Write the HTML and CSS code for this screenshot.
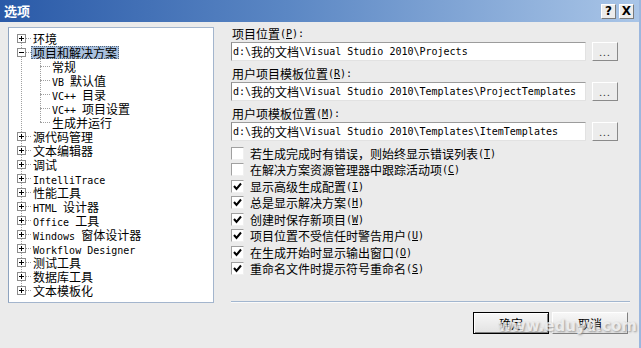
FILE: index.html
```html
<!DOCTYPE html>
<html lang="zh-CN">
<head>
    <meta charset="UTF-8">
    <title>选项</title>
    <link rel="stylesheet" href="styles.css">
</head>
<body>
    <div class="dialog">
        <div class="titlebar">
            <span class="title">选项</span>
            <div class="title-buttons">
                <span class="tbtn">?</span>
                <span class="tbtn">X</span>
            </div>
        </div>

        <div class="content">
            <div class="tree">
                <div class="tree-list">
                    <div class="node"><span class="toggle"></span><span class="hline"></span><span class="label">环境</span></div>
                    <div class="node"><span class="toggle open"></span><span class="hline"></span><span class="label selected">项目和解决方案</span></div>
                    <div class="children">
                        <div class="leaf"><span class="hline"></span><span class="label">常规</span></div>
                        <div class="leaf"><span class="hline"></span><span class="label"><span class="en">VB </span>默认值</span></div>
                        <div class="leaf"><span class="hline"></span><span class="label"><span class="en">VC++ </span>目录</span></div>
                        <div class="leaf"><span class="hline"></span><span class="label"><span class="en">VC++ </span>项目设置</span></div>
                        <div class="leaf"><span class="hline"></span><span class="label">生成并运行</span></div>
                    </div>
                    <div class="node"><span class="toggle"></span><span class="hline"></span><span class="label">源代码管理</span></div>
                    <div class="node"><span class="toggle"></span><span class="hline"></span><span class="label">文本编辑器</span></div>
                    <div class="node"><span class="toggle"></span><span class="hline"></span><span class="label">调试</span></div>
                    <div class="node"><span class="toggle"></span><span class="hline"></span><span class="label"><span class="en">IntelliTrace</span></span></div>
                    <div class="node"><span class="toggle"></span><span class="hline"></span><span class="label">性能工具</span></div>
                    <div class="node"><span class="toggle"></span><span class="hline"></span><span class="label"><span class="en">HTML </span>设计器</span></div>
                    <div class="node"><span class="toggle"></span><span class="hline"></span><span class="label"><span class="en">Office </span>工具</span></div>
                    <div class="node"><span class="toggle"></span><span class="hline"></span><span class="label"><span class="en">Windows </span>窗体设计器</span></div>
                    <div class="node"><span class="toggle"></span><span class="hline"></span><span class="label"><span class="en">Workflow Designer</span></span></div>
                    <div class="node"><span class="toggle"></span><span class="hline"></span><span class="label">测试工具</span></div>
                    <div class="node"><span class="toggle"></span><span class="hline"></span><span class="label">数据库工具</span></div>
                    <div class="node"><span class="toggle"></span><span class="hline"></span><span class="label">文本模板化</span></div>
                </div>
            </div>

            <div class="panel">
                <div class="field-label">项目位置<span class="en">(<u>P</u>):</span></div>
                <div class="field">
                    <div class="textbox"><span class="en">d:\</span>我的文档<span class="en">\Visual Studio 2010\Projects</span></div>
                    <span class="browse">...</span>
                </div>

                <div class="field-label">用户项目模板位置<span class="en">(<u>R</u>):</span></div>
                <div class="field">
                    <div class="textbox"><span class="en">d:\</span>我的文档<span class="en">\Visual Studio 2010\Templates\ProjectTemplates</span></div>
                    <span class="browse">...</span>
                </div>

                <div class="field-label">用户项模板位置<span class="en">(<u>M</u>):</span></div>
                <div class="field">
                    <div class="textbox"><span class="en">d:\</span>我的文档<span class="en">\Visual Studio 2010\Templates\ItemTemplates</span></div>
                    <span class="browse">...</span>
                </div>

                <div class="checklist">
                    <div class="check"><span class="box"></span>若生成完成时有错误，则始终显示错误列表<span class="en">(<u>T</u>)</span></div>
                    <div class="check"><span class="box"></span>在解决方案资源管理器中跟踪活动项<span class="en">(<u>C</u>)</span></div>
                    <div class="check"><span class="box checked"></span>显示高级生成配置<span class="en">(<u>I</u>)</span></div>
                    <div class="check"><span class="box checked"></span>总是显示解决方案<span class="en">(<u>H</u>)</span></div>
                    <div class="check"><span class="box checked"></span>创建时保存新项目<span class="en">(<u>W</u>)</span></div>
                    <div class="check"><span class="box checked"></span>项目位置不受信任时警告用户<span class="en">(<u>U</u>)</span></div>
                    <div class="check"><span class="box checked"></span>在生成开始时显示输出窗口<span class="en">(<u>O</u>)</span></div>
                    <div class="check"><span class="box checked"></span>重命名文件时提示符号重命名<span class="en">(<u>S</u>)</span></div>
                </div>

                <div class="separator"></div>
            </div>
        </div>

        <div class="footer">
            <button class="btn default">确定</button>
            <button class="btn">取消</button>
        </div>

        <div class="watermark">www.eduyu.com</div>
    </div>
</body>
</html>
```

FILE: styles.css
```css
* {
    box-sizing: border-box;
}

body {
    margin: 0;
    font-family: "Noto Sans CJK SC", "DejaVu Sans", sans-serif;
    font-size: 12px;
    color: #000;
}

.en {
    font-family: "DejaVu Sans Mono", monospace;
    font-size: 10px;
}

.dialog {
    position: relative;
    width: 641px;
    height: 348px;
    background-color: #ebebeb;
    border-right: 2px solid #9bb7de;
    overflow: hidden;
}

/* title bar */
.titlebar {
    height: 22px;
    display: flex;
    align-items: center;
    justify-content: space-between;
    padding: 0 5px 0 4px;
    background: linear-gradient(to right, #2a5aa8, #5b87c4 45%, #a9c5e7);
}

.title {
    color: #fff;
    font-weight: bold;
    font-size: 13px;
    line-height: 22px;
}

.title-buttons {
    display: flex;
    gap: 3px;
}

.tbtn {
    width: 15px;
    height: 15px;
    display: flex;
    align-items: center;
    justify-content: center;
    background-color: #ececec;
    border: 1px solid;
    border-color: #fff #7a7a7a #7a7a7a #fff;
    font: bold 12px "DejaVu Sans", sans-serif;
}

.content {
    display: flex;
    padding: 5px 0 0 8px;
}

/* tree */
.tree {
    width: 206px;
    height: 276px;
    background-color: #fff;
    border: 1px solid #a3b5cd;
    border-left-color: #8ea3bf;
    padding: 3px 0 0 8px;
}

.tree-list {
    position: relative;
}

.tree-list::before {
    content: "";
    position: absolute;
    left: 4px;
    top: 7px;
    bottom: 7px;
    border-left: 1px dotted #a0a0a0;
}

.node, .leaf {
    height: 14px;
    display: flex;
    align-items: center;
    white-space: nowrap;
}

.toggle {
    position: relative;
    width: 9px;
    height: 9px;
    flex: none;
    border: 1px solid #8c8c8c;
    background:
        linear-gradient(#000, #000) center / 5px 1px no-repeat,
        linear-gradient(#000, #000) center / 1px 5px no-repeat,
        #fff;
}

.toggle.open {
    background:
        linear-gradient(#000, #000) center / 5px 1px no-repeat,
        #fff;
}

.hline {
    width: 5px;
    flex: none;
    border-top: 1px dotted #a0a0a0;
}

.label {
    height: 13px;
    padding: 0 2px;
    line-height: 13px;
}

.label.selected {
    background-color: #a9c0de;
    outline: 1px dotted #55667a;
    outline-offset: -1px;
}

.children {
    position: relative;
}

.children::before {
    content: "";
    position: absolute;
    left: 23px;
    top: 0;
    bottom: 7px;
    border-left: 1px dotted #a0a0a0;
}

.leaf {
    padding-left: 23px;
}

.leaf .hline {
    width: 10px;
}

/* right panel */
.panel {
    width: 399px;
    height: 277px;
    margin: -1px 0 0 17px;
    display: flex;
    flex-direction: column;
}

.field-label {
    height: 15px;
    display: flex;
    align-items: center;
    padding-left: 1px;
    margin-bottom: 1px;
    white-space: nowrap;
}

.field {
    display: flex;
    align-items: center;
    gap: 6px;
    margin-bottom: 5px;
}

.textbox {
    width: 355px;
    height: 19px;
    display: flex;
    align-items: center;
    padding-left: 1px;
    background-color: #fff;
    border: 1px solid;
    border-color: #9c9c9c #e2e2e2 #e2e2e2 #8a8a8a;
    white-space: nowrap;
    overflow: hidden;
}

.browse {
    width: 26px;
    height: 19px;
    display: flex;
    align-items: center;
    justify-content: center;
    background-color: #ececec;
    border: 1px solid;
    border-color: #fff #8a8a8a #8a8a8a #fff;
    font-size: 10px;
    letter-spacing: 1px;
    color: #333;
}

.checklist {
    margin-top: -1px;
}

.check {
    height: 16.5px;
    display: flex;
    align-items: center;
    white-space: nowrap;
}

.box {
    width: 13px;
    height: 13px;
    flex: none;
    margin-right: 6px;
    background-color: #fff;
    border: 1px solid;
    border-color: #a0a0a0 #f0f0f0 #f0f0f0 #a0a0a0;
}

.box.checked {
    background: #fff url("data:image/svg+xml,%3Csvg xmlns='http://www.w3.org/2000/svg' width='11' height='11'%3E%3Cpolyline points='2,5 4.5,8 9,2.5' fill='none' stroke='%23000' stroke-width='2'/%3E%3C/svg%3E") center no-repeat;
}

.separator {
    margin-top: auto;
    height: 2px;
    border-top: 1px solid #a2b6cf;
    border-bottom: 1px solid #fafafa;
}

/* footer */
.footer {
    display: flex;
    justify-content: flex-end;
    gap: 3px;
    padding: 9px 11px 0 0;
}

.btn {
    width: 76px;
    height: 22px;
    padding: 0;
    font-family: "Noto Sans CJK SC", sans-serif;
    font-size: 12px;
    color: #000;
    background: linear-gradient(#f7f7f7, #e2e2e2);
    border: 1px solid;
    border-color: #fff #808080 #808080 #fff;
}

.btn.default {
    border: 1px solid #000;
    box-shadow: inset 1px 1px 0 #fff, inset -1px -1px 0 #808080;
}

.watermark {
    position: absolute;
    left: 498px;
    top: 317px;
    font: bold 15px "DejaVu Sans", sans-serif;
    color: #ececec;
    text-shadow: 1px 1px 2px #8a8a8a;
    opacity: 0.8;
    pointer-events: none;
}
```
